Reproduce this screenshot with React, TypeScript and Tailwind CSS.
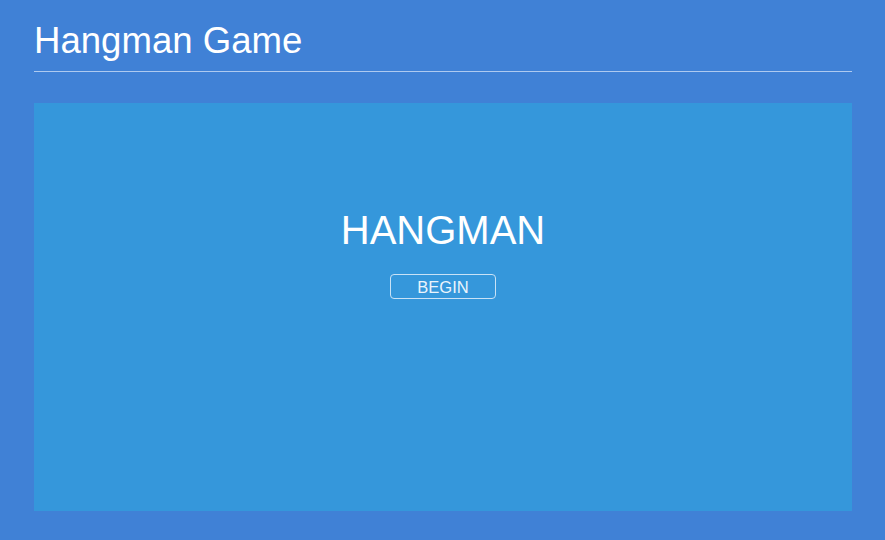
export default function App() {
  return (
    <div
      className="w-[885px] h-[540px] bg-[#4081d6] px-[34px] pt-[21px] pb-[29px] flex flex-col text-white"
      style={{ fontFamily: '"Liberation Sans", Arial, sans-serif' }}
    >
      <h1 className="text-[36.6px] leading-[40px] w-[818px] h-[51px] border-b border-[#aecaf0]">Hangman Game</h1>
      <div className="mt-[31px] w-[818px] h-[408px] bg-[#3597db] flex flex-col items-center pt-[104px]">
        <div className="text-[40px] leading-[46px]">HANGMAN</div>
        <button className="mt-[21px] w-[106px] h-[25px] border border-[#c9e2f6] rounded-[4px] text-[16.5px] leading-[20px] text-[#eaf4fc] flex items-center justify-center">
          BEGIN
        </button>
      </div>
    </div>
  );
}
